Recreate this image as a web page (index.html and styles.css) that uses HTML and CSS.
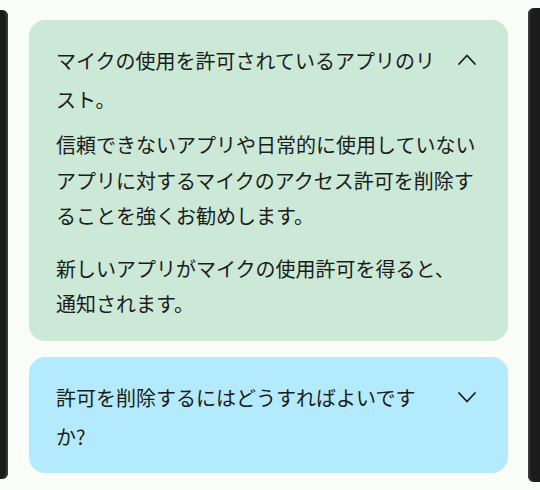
FILE: index.html
```html
<!DOCTYPE html>
<html lang="ja">

<head>
    <meta charset="UTF-8">
    <meta name="viewport" content="width=device-width, initial-scale=1.0">
    <title>マイクの権限</title>
    <link rel="stylesheet" href="styles.css">
</head>

<body>
    <div class="phone">
        <div class="bezel left"></div>
        <div class="screen">
            <div class="card green">
                <div class="head">
                    <span class="title">マイクの使用を許可されているアプリのリスト。</span>
                    <svg class="chevron" width="20" height="20" viewBox="0 0 20 20">
                        <polyline points="2,14 10,5.5 18,14" />
                    </svg>
                </div>
                <p class="text">信頼できないアプリや日常的に使用していないアプリに対するマイクのアクセス許可を削除することを強くお勧めします。</p>
                <p class="text">新しいアプリがマイクの使用許可を得ると、<br>通知されます。</p>
            </div>
            <div class="card blue">
                <div class="head">
                    <span class="title">許可を削除するにはどうすればよいですか?</span>
                    <svg class="chevron" width="20" height="20" viewBox="0 0 20 20">
                        <polyline points="2,6 10,14.5 18,6" />
                    </svg>
                </div>
            </div>
        </div>
        <div class="bezel right"></div>
    </div>
</body>

</html>
```

FILE: styles.css
```css
* {
    padding: 0;
    margin: 0;
    box-sizing: border-box;
}

body {
    width: 540px;
    height: 490px;
    background-color: #fafdf7;
    font-family: "Noto Sans CJK JP", "Noto Sans", sans-serif;
    color: #1a1c1a;
    overflow: hidden;
}

.phone {
    display: flex;
    height: 490px;
}

/* 端末の縁 */
.bezel {
    background-color: #1c1c1c;
}

.bezel.left {
    width: 8px;
    margin-top: 10px;
    height: 469px;
    border-radius: 0 6px 6px 0;
    box-shadow: inset -2px 0 0 #3a3a3a;
}

.bezel.right {
    width: 12px;
    margin-top: 8px;
    height: 474px;
    border-radius: 6px 0 0 6px;
    box-shadow: inset 2px 0 0 #3a3a3a;
}

.screen {
    width: 520px;
    padding: 20px 20px 0 21px;
    display: flex;
    flex-direction: column;
    gap: 16px;
}

.card {
    border-radius: 16px;
    padding: 21px 27px 17px 27px;
}

.card.green {
    background-color: #cce8d7;
    padding-bottom: 19px;
}

.card.blue {
    background-color: #b4eafd;
}

.head {
    display: flex;
    align-items: flex-start;
}

.title {
    flex: 1;
    font-size: 20px;
    line-height: 39px;
}

.chevron {
    width: 20px;
    height: 20px;
    margin: 9px 4px 0 16px;
    flex-shrink: 0;
}

.chevron polyline {
    fill: none;
    stroke: #1a1c1e;
    stroke-width: 1.8;
    stroke-linecap: round;
    stroke-linejoin: round;
}

.text {
    font-size: 20px;
    line-height: 35.5px;
    margin-top: 8px;
}

.text + .text {
    margin-top: 17px;
}
```
